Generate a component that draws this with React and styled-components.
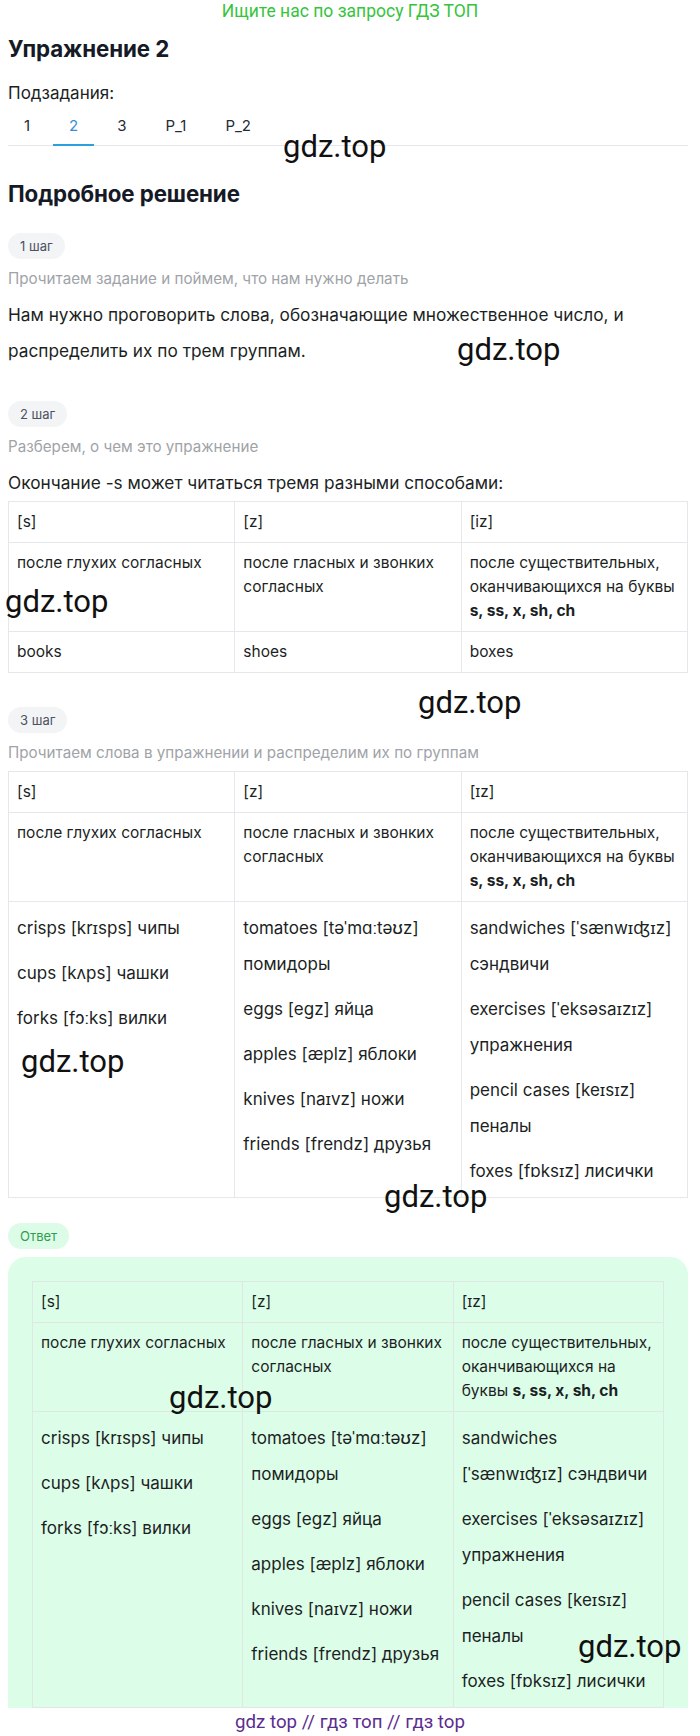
import React from "react";
import styled, { createGlobalStyle } from "styled-components";

const Global = createGlobalStyle`
  html, body { margin: 0; padding: 0; background: #ffffff; }
  body { font-family: Inter, "Noto Sans", sans-serif; color: #1c1f24; }
  * { box-sizing: border-box; }
`;

const Page = styled.div`
  position: relative;
`;

const Banner = styled.div`
  font-family: Roboto, "Liberation Sans", sans-serif;
  font-size: 17.5px;
  line-height: 22px;
  color: #35c43c;
  text-align: center;
`;

const Content = styled.main`
  padding: 0 12px 0 8px;
`;

const Title = styled.h1`
  margin: ${(p) => p.$top || 12}px 0 0;
  font-size: 22.3px;
  font-weight: 700;
  line-height: 30px;
  color: #151a26;
  letter-spacing: -0.1px;
`;

const Label = styled.div`
  margin-top: 17px;
  font-size: 17px;
  line-height: 24px;
  color: #1c1f24;
`;

const Tabs = styled.nav`
  display: flex;
  gap: 7px;
  margin-top: 1px;
  border-bottom: 1px solid #e5e7eb;
`;

const Tab = styled.span`
  padding: 8px 16px 6px;
  font-size: 15px;
  line-height: 24px;
  color: ${(p) => (p.$active ? "#3a8fd2" : "#262c36")};
  border-bottom: 2px solid ${(p) => (p.$active ? "#2aa0de" : "transparent")};
  margin-bottom: -1px;
`;

const StepHead = styled.div`
  margin-top: ${(p) => p.$top}px;
  display: flex;
`;

const Badge = styled.span`
  display: inline-flex;
  align-items: center;
  height: 26px;
  padding: 0 12px;
  border-radius: 13px;
  font-size: 13px;
  background: ${(p) => (p.$answer ? "#dcfce7" : "#f3f4f6")};
  color: ${(p) => (p.$answer ? "#2f9c52" : "#4b5260")};
`;

const Hint = styled.div`
  margin: 8px 0 6px;
  font-size: 15.2px;
  line-height: 24px;
  color: #a0a3a8;
`;

const Text = styled.p`
  margin: 0;
  font-size: 17.25px;
  line-height: 36px;
  color: #1c1f24;
`;

const Table = styled.table`
  width: 100%;
  table-layout: fixed;
  border-collapse: collapse;
`;

const Cell = styled.td`
  border: 1px solid ${(p) => (p.$answer ? "#dfe7e2" : "#e6e7ea")};
  padding: 8px;
  vertical-align: top;
  font-size: 15.5px;
  line-height: 24px;
  color: #1c1f24;
`;

const Item = styled.p`
  margin: 0 0 9px;
  font-size: 17px;
  line-height: 36px;
  &:last-child { margin-bottom: 0; }
`;

const AnswerBox = styled.section`
  margin-top: 8px;
  padding: 24px;
  border-radius: 18px;
  background: #dcfde8;
`;

const Watermark = styled.span`
  position: absolute;
  font-family: Roboto, "Liberation Sans", sans-serif;
  font-size: 31px;
  line-height: 1;
  color: #111;
  pointer-events: none;
  white-space: nowrap;
`;

const Footer = styled.footer`
  position: fixed;
  left: 0;
  right: 0;
  bottom: 0;
  height: 28px;
  background: #fff;
  display: flex;
  align-items: center;
  justify-content: center;
  font-family: Roboto, "Liberation Sans", sans-serif;
  font-size: 18.7px;
  color: #5b2d90;
`;

const rule = (
  <>
    после существительных, оканчивающихся на буквы <b>s, ss, x, sh, ch</b>
  </>
);

const ruleRow = ["после глухих согласных", "после гласных и звонких согласных", rule];

const words = [
  ["crisps [krɪsps] чипы", "cups [kʌps] чашки", "forks [fɔːks] вилки"],
  [
    "tomatoes [təˈmɑːtəʊz] помидоры",
    "eggs [egz] яйца",
    "apples [æplz] яблоки",
    "knives [naɪvz] ножи",
    "friends [frendz] друзья",
  ],
  [
    "sandwiches [ˈsænwɪʤɪz] сэндвичи",
    "exercises [ˈeksəsaɪzɪz] упражнения",
    "pencil cases [keɪsɪz] пеналы",
    "foxes [fɒksɪz] лисички",
  ],
];

function Row({ cells, answer }) {
  return (
    <tr>
      {cells.map((c, i) => (
        <Cell key={i} $answer={answer}>
          {c}
        </Cell>
      ))}
    </tr>
  );
}

function WordsTable({ answer }) {
  return (
    <Table>
      <tbody>
        <Row answer={answer} cells={["[s]", "[z]", "[ɪz]"]} />
        <Row answer={answer} cells={ruleRow} />
        <Row
          answer={answer}
          cells={words.map((list, i) => (
            <React.Fragment key={i}>
              {list.map((w) => (
                <Item key={w}>{w}</Item>
              ))}
            </React.Fragment>
          ))}
        />
      </tbody>
    </Table>
  );
}

const marks = [
  [283, 131],
  [457, 334],
  [5, 586],
  [418, 687],
  [21, 1046],
  [384, 1181],
  [169, 1382],
  [578, 1631],
];

export default function App() {
  return (
    <Page>
      <Global />
      <Banner>Ищите нас по запросу ГДЗ ТОП</Banner>
      <Content>
        <Title>Упражнение 2</Title>
        <Label>Подзадания:</Label>
        <Tabs>
          {["1", "2", "3", "P_1", "P_2"].map((t) => (
            <Tab key={t} $active={t === "2"}>
              {t}
            </Tab>
          ))}
        </Tabs>

        <Title $top={33}>Подробное решение</Title>

        <StepHead $top={24}>
          <Badge>1 шаг</Badge>
        </StepHead>
        <Hint>Прочитаем задание и поймем, что нам нужно делать</Hint>
        <Text>
          Нам нужно проговорить слова, обозначающие множественное число, и распределить их по
          трем группам.
        </Text>

        <StepHead $top={32}>
          <Badge>2 шаг</Badge>
        </StepHead>
        <Hint>Разберем, о чем это упражнение</Hint>
        <Text>Окончание -s может читаться тремя разными способами:</Text>
        <Table>
          <tbody>
            <Row cells={["[s]", "[z]", "[iz]"]} />
            <Row cells={ruleRow} />
            <Row cells={["books", "shoes", "boxes"]} />
          </tbody>
        </Table>

        <StepHead $top={34}>
          <Badge>3 шаг</Badge>
        </StepHead>
        <Hint>Прочитаем слова в упражнении и распределим их по группам</Hint>
        <WordsTable />

        <StepHead $top={25}>
          <Badge $answer>Ответ</Badge>
        </StepHead>
        <AnswerBox>
          <WordsTable answer />
        </AnswerBox>
      </Content>

      {marks.map(([x, y], i) => (
        <Watermark key={i} style={{ left: x, top: y }}>
          gdz.top
        </Watermark>
      ))}

      <Footer>gdz top // гдз топ // гдз top</Footer>
    </Page>
  );
}
